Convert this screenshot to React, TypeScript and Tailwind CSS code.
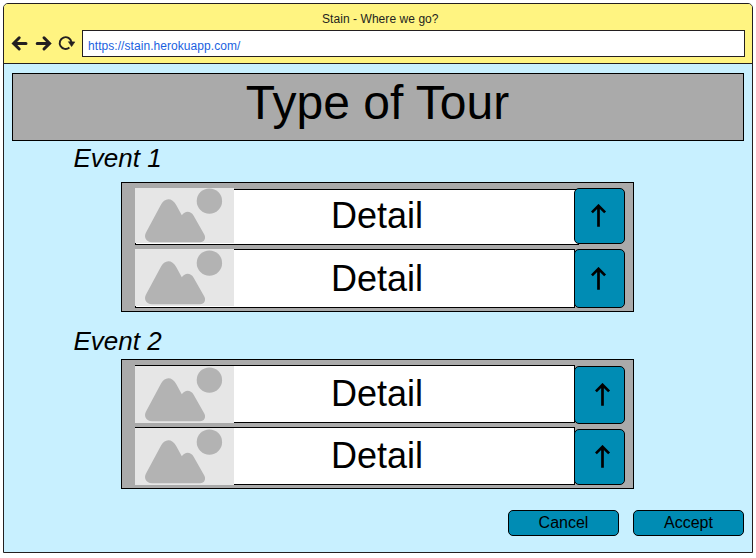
import React from "react";

const SANS = "font-['Liberation_Sans',Arial,sans-serif]";

function NavIcons() {
  return (
    <svg className="block h-[20px] w-[66px] shrink-0" viewBox="0 0 66 20" fill="none" stroke="#231f20">
      <path d="M15 10.4H3.2M8.2 4.8L2.6 10.4L8.2 16" strokeWidth="3" strokeLinecap="round" />
      <path d="M26.2 10.4H38M33 4.8L38.6 10.4L33 16" strokeWidth="3" strokeLinecap="round" />
      <path d="M58.4 14.6A5.9 5.9 0 1 1 60.4 9" strokeWidth="1.9" />
      <path d="M57.4 8.7L63.8 8.9L60.6 13.6Z" fill="#231f20" strokeWidth="0.6" />
    </svg>
  );
}

function Placeholder({ className, viewBox }: { className: string; viewBox: string }) {
  return (
    <svg className={`block w-[99px] shrink-0 bg-[#e6e6e6] ${className}`} viewBox={viewBox}>
      <circle cx="74.4" cy="14.1" r="12.7" fill="#b3b3b3" />
      <path
        fill="#b3b3b3"
        d="M17 55.2C11 55.2 8.5 50 11 45.5L25.5 18.5C29.5 10.2 37 10.2 41.2 18L46.8 28.3C50 23.5 55.5 23.5 58.5 28.5L69 47C71.5 51 69.5 55.2 65 55.2Z"
      />
    </svg>
  );
}

type RowProps = {
  row: string;
  box: string;
  image: string;
  viewBox?: string;
  label: string;
  button: string;
  arrow: string;
};

function Row({ row, box, image, viewBox = "0 0 99 57", label, button, arrow }: RowProps) {
  return (
    <div className={`flex items-start ${row}`}>
      <div className={`flex shrink-0 items-start border border-black bg-white ${box}`}>
        <Placeholder className={`-ml-px ${image}`} viewBox={viewBox} />
        <span className={`ml-[97px] text-[36px] leading-[40px] ${label}`}>Detail</span>
      </div>
      <button className={`relative block w-[51px] shrink-0 rounded-[5px] border border-black bg-[#008cb4] ${button}`}>
        <svg className={`block h-[24px] w-[16px] ${arrow}`} viewBox="0 0 16 24" fill="none" stroke="#000">
          <path d="M7.5 22.8V2M0.9 8.4L7.5 1.8L14.1 8.4" strokeWidth="2.7" />
        </svg>
      </button>
    </div>
  );
}

const PANEL = "ml-[117px] h-[130px] w-[513px] border border-black bg-[#aaaaaa] pl-[13px]";
const HEADING = "ml-[69.5px] text-[26px] italic leading-[30px]";

export default function App() {
  return (
    <div className={`h-[558px] w-[756px] overflow-hidden bg-white pl-[3px] pt-[3px] text-black ${SANS}`}>
      <div className="h-[550px] w-[750px] overflow-hidden rounded-t-[5px] border border-[#231f20] bg-[#c8f0ff]">
        <header className="h-[60px] border-b border-[#231f20] bg-[#fff481]">
          <div className="h-[26px] pl-[318px] pt-[7px] text-[12px] leading-[16px] tracking-[0.06px] text-[#231f20]">
            Stain - Where we go?
          </div>
          <div className="flex pl-[7px]">
            <div className="w-[71px] shrink-0 pt-[3px]">
              <NavIcons />
            </div>
            <div className="h-[27px] w-[663px] border border-[#231f20] bg-white pl-[5px] pt-[7px] text-[12px] leading-[16px] tracking-[0.06px] text-[#1a5fe0]">
              https://stain.herokuapp.com/
            </div>
          </div>
        </header>
        <main>
          <h1 className="ml-[8px] mt-[9px] h-[68px] w-[732px] border border-black bg-[#aaaaaa] pr-[1px] pt-px text-center text-[48px] leading-[56px]">
            Type of Tour
          </h1>
          <h2 className={`mt-[2px] ${HEADING}`}>Event 1</h2>
          <section className={`mt-[9px] ${PANEL}`}>
            <Row
              row="h-[66px] pt-[5px]"
              box="mt-px h-[56px] w-[444px]"
              image="-mt-[2px] h-[55px]"
              viewBox="0 1 99 55"
              label="mt-[6px]"
              button="-ml-[5px] h-[56px]"
              arrow="ml-[16px] mt-[-1px]"
            />
            <Row
              row=""
              box="h-[59px] w-[440px]"
              image="-mt-px h-[57px]"
              label="mt-[9px]"
              button="-ml-px h-[59px]"
              arrow="ml-[16px]"
            />
          </section>
          <h2 className={`mt-[14px] ${HEADING}`}>Event 2</h2>
          <section className={`mt-[3px] ${PANEL}`}>
            <Row
              row="h-[67px] pt-[5px]"
              box="h-[58px] w-[440px]"
              image="h-[57px]"
              label="mt-[8px]"
              button="-ml-px mt-px h-[58px]"
              arrow="ml-[20px]"
            />
            <Row
              row=""
              box="h-[58px] w-[440px]"
              image="h-[57px]"
              label="mt-[8px]"
              button="-ml-px mt-[2px] h-[56px]"
              arrow="ml-[20px]"
            />
          </section>
          <footer className="ml-[504px] mt-[21px] flex gap-[14px]">
            <button className="h-[26px] w-[111px] rounded-[5px] border border-black bg-[#008cb4] text-center text-[16px] leading-[24px]">
              Cancel
            </button>
            <button className="h-[26px] w-[111px] rounded-[5px] border border-black bg-[#008cb4] text-center text-[16px] leading-[24px]">
              Accept
            </button>
          </footer>
        </main>
      </div>
    </div>
  );
}
